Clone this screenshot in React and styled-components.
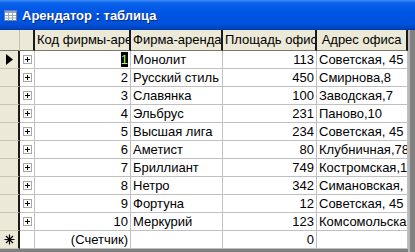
import React from 'react';
import styled, { createGlobalStyle } from 'styled-components';

const GlobalStyle = createGlobalStyle`
  html, body { margin: 0; padding: 0; background: #808080; }
  body { font-family: "Liberation Sans", Arial, sans-serif; }
`;

const COLS = '20px 15px 96px 92px 94px 91px';

const Window = styled.div`
  width: 415px;
  height: 252px;
  display: flex;
  flex-direction: column;
  background: #808080;
  overflow: hidden;
`;

const TitleBar = styled.div`
  height: 30px;
  flex: none;
  display: flex;
  align-items: center;
  gap: 5px;
  padding-left: 4px;
  background: linear-gradient(180deg, #3d8ff7 0%, #0a62ea 10%, #0055e5 40%, #0052dc 80%, #0044c0 94%, #003aa8 100%);
  color: #fff;
  font-weight: bold;
  font-size: 13px;
  text-shadow: 1px 1px 0 #0a2a80;
`;

const Body = styled.div`
  display: flex;
  flex: 1;
  min-height: 0;
`;

const Sheet = styled.div`
  width: 408px;
  background: #fff;
  display: flex;
  flex-direction: column;
  align-self: flex-start;
`;

const RightEdge = styled.div`
  flex: 1;
  border-left: 2px solid #b8b8b8;
  background: #808080;
`;

const Row = styled.div`
  display: grid;
  grid-template-columns: ${COLS};
  height: ${({ $h }) => $h}px;
`;

const HeadCell = styled.div`
  background: #ece9d8;
  border-right: 2px solid #1a1a1a;
  border-bottom: 1px solid #7a7868;
  box-sizing: border-box;
  font-size: 13px;
  color: #000;
  line-height: 20px;
  padding: 0 2px;
  text-align: center;
  white-space: nowrap;
  overflow: hidden;
  &:first-child { border-right: 1px solid #c4c0ac; }
`;

const Selector = styled.div`
  background: #ece9d8;
  border-right: 2px solid #1a1a1a;
  border-bottom: 1px solid #c8c4b0;
  box-sizing: border-box;
  display: flex;
  align-items: center;
  justify-content: center;
`;

const Cell = styled.div`
  border-right: 1px solid #c0c0c0;
  border-bottom: 1px solid #c0c0c0;
  box-sizing: border-box;
  font-size: 13px;
  line-height: 17px;
  color: #000;
  padding: 0 2px;
  white-space: nowrap;
  overflow: hidden;
  text-align: ${({ $right }) => ($right ? 'right' : 'left')};
  display: ${({ $center }) => ($center ? 'flex' : 'block')};
  align-items: center;
  justify-content: center;
`;

const PlusBox = styled.span`
  width: 9px;
  height: 9px;
  box-sizing: border-box;
  border: 1px solid #a8a8a8;
  background: #fff;
  display: flex;
  align-items: center;
  justify-content: center;
`;

const Caret = styled.span`
  background: #000;
  color: #9cff7a;
`;

const rows = [
  [1, 'Монолит', 113, 'Советская, 45'],
  [2, 'Русский стиль', 450, 'Смирнова,8'],
  [3, 'Славянка', 100, 'Заводская,7'],
  [4, 'Эльбрус', 231, 'Паново,10'],
  [5, 'Высшая лига', 234, 'Советская, 45'],
  [6, 'Аметист', 80, 'Клубничная,78'],
  [7, 'Бриллиант', 749, 'Костромская,12'],
  [8, 'Нетро', 342, 'Симановская, 5'],
  [9, 'Фортуна', 12, 'Советская, 45'],
  [10, 'Меркурий', 123, 'Комсомольская,3'],
];

const TableIcon = () => (
  <svg width="13" height="11" viewBox="0 0 13 11">
    <rect x="0.5" y="0.5" width="12" height="10" fill="#fff" stroke="#6a7fa8" />
    <rect x="1" y="1" width="11" height="2" fill="#8aa6d6" />
    <path d="M1 5.5h11M1 8h11M4.5 3v7.5M8.5 3v7.5" stroke="#9aa6bc" strokeWidth="1" />
  </svg>
);

const Plus = () => (
  <PlusBox>
    <svg width="7" height="7" viewBox="0 0 7 7">
      <path d="M3.5 1v5M1 3.5h5" stroke="#000" strokeWidth="1" />
    </svg>
  </PlusBox>
);

export default function App() {
  return (
    <Window>
      <GlobalStyle />
      <TitleBar>
        <TableIcon />
        <span>Арендатор : таблица</span>
      </TitleBar>
      <Body>
        <Sheet>
          <Row $h={21}>
            <HeadCell />
            <HeadCell />
            <HeadCell>Код фирмы-арендатора</HeadCell>
            <HeadCell>Фирма-арендатор</HeadCell>
            <HeadCell>Площадь офиса</HeadCell>
            <HeadCell>Адрес офиса</HeadCell>
          </Row>
          {rows.map(([id, name, area, addr]) => (
            <Row $h={18} key={id}>
              <Selector>
                {id === 1 && (
                  <svg width="7" height="11" viewBox="0 0 7 11">
                    <path d="M0 0L7 5.5L0 11Z" fill="#000" />
                  </svg>
                )}
              </Selector>
              <Cell $center><Plus /></Cell>
              <Cell $right>{id === 1 ? <Caret>1</Caret> : id}</Cell>
              <Cell>{name}</Cell>
              <Cell $right>{area}</Cell>
              <Cell>{addr}</Cell>
            </Row>
          ))}
          <Row $h={18}>
            <Selector>
              <svg width="11" height="11" viewBox="0 0 11 11">
                <path d="M5.5 0.5v10M0.5 5.5h10M2 2l7 7M9 2l-7 7" stroke="#000" strokeWidth="1.2" />
              </svg>
            </Selector>
            <Cell />
            <Cell $right>(Счетчик)</Cell>
            <Cell />
            <Cell $right>0</Cell>
            <Cell />
          </Row>
        </Sheet>
        <RightEdge />
      </Body>
    </Window>
  );
}
